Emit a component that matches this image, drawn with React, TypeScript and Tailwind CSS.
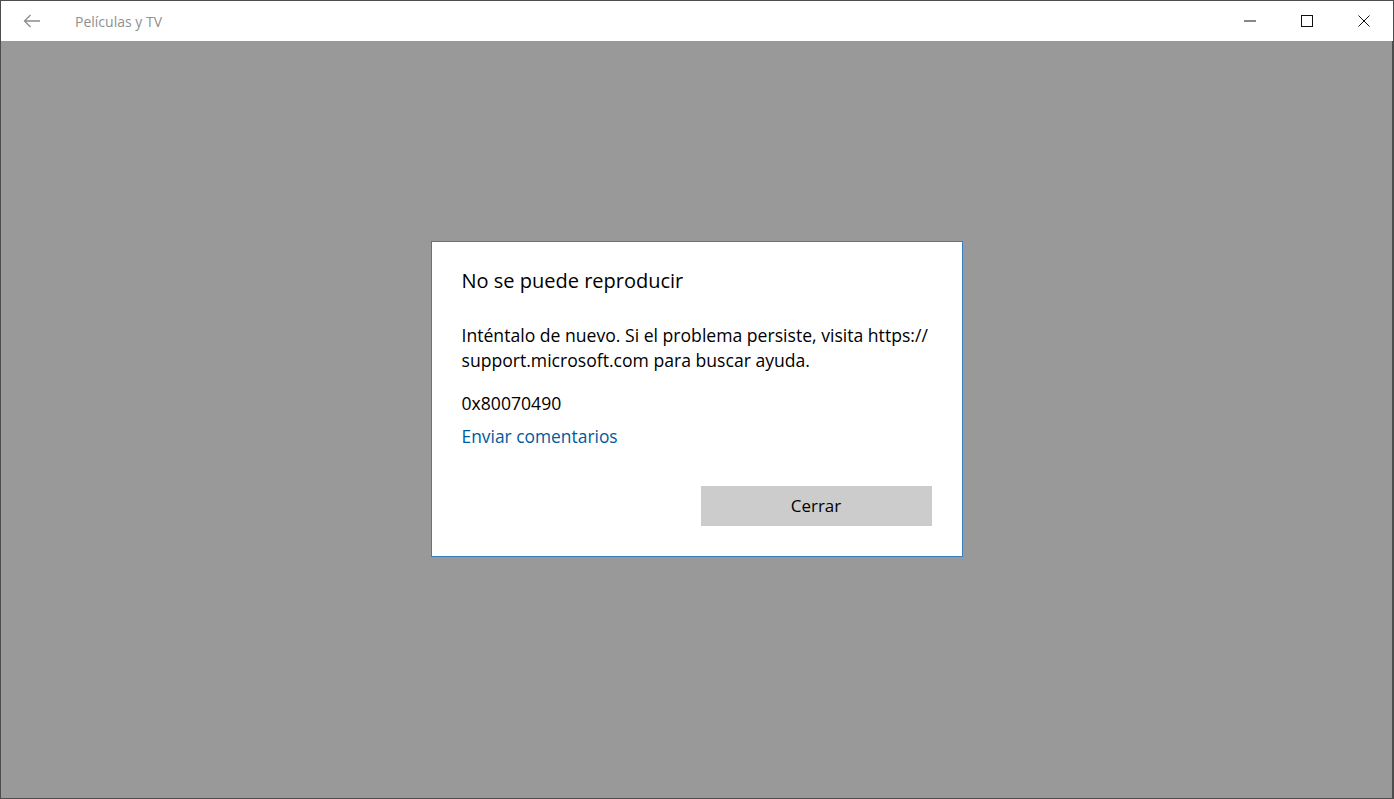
import React from "react";

export default function App() {
  const font = { fontFamily: '"Open Sans", "Noto Sans", sans-serif' };
  return (
    <div className="w-[1394px] h-[799px] bg-[#4d4d4d] p-px flex flex-col overflow-hidden" style={font}>
      <div className="h-[40px] bg-white flex items-center shrink-0">
        <div className="w-[62px] h-full flex items-center justify-center">
          <svg width="18" height="14" viewBox="0 0 18 14" fill="none" stroke="#8c8c8c" strokeWidth="1.3">
            <path d="M17 7H1.5M7.5 1L1.5 7l6 6" />
          </svg>
        </div>
        <div className="ml-[12px] text-[14px] text-[#8f8f8f]">Películas y TV</div>
        <div className="flex-1" />
        <div className="w-[57px] h-full flex items-center justify-center">
          <svg width="12" height="2" viewBox="0 0 12 2"><path d="M0 1h12" stroke="#111" strokeWidth="1" /></svg>
        </div>
        <div className="w-[57px] h-full flex items-center justify-center">
          <svg width="12" height="12" viewBox="0 0 12 12"><rect x="0.5" y="0.5" width="11" height="11" fill="none" stroke="#111" strokeWidth="1" /></svg>
        </div>
        <div className="w-[57px] h-full flex items-center justify-center mr-px">
          <svg width="12" height="12" viewBox="0 0 12 12"><path d="M0.5 0.5l11 11M11.5 0.5l-11 11" stroke="#111" strokeWidth="1" /></svg>
        </div>
      </div>
      <div className="flex-1 bg-[#999999] flex justify-center items-start pt-[200px] mr-px">
        <div className="w-[532px] h-[316px] bg-white border border-[#3a7cc0] pl-[30px] pr-[30px] pt-[25px] pb-[30px] flex flex-col">
          <div className="text-[20px] leading-[28px] text-black whitespace-nowrap">No se puede reproducir</div>
          <div className="mt-[28px] text-[17.6px] leading-[25px] text-black whitespace-nowrap">
            Inténtalo de nuevo. Si el problema persiste, visita https://
            <br />
            support.microsoft.com para buscar ayuda.
          </div>
          <div className="mt-[18px] text-[17.6px] leading-[24px] text-black">0x80070490</div>
          <div className="mt-[9px] text-[17.4px] leading-[24px] text-[#005a9e]">Enviar comentarios</div>
          <div className="flex-1" />
          <div className="flex justify-end">
            <div className="w-[231px] h-[40px] bg-[#cccccc] flex items-center justify-center text-[17px] text-black">
              Cerrar
            </div>
          </div>
        </div>
      </div>
    </div>
  );
}
